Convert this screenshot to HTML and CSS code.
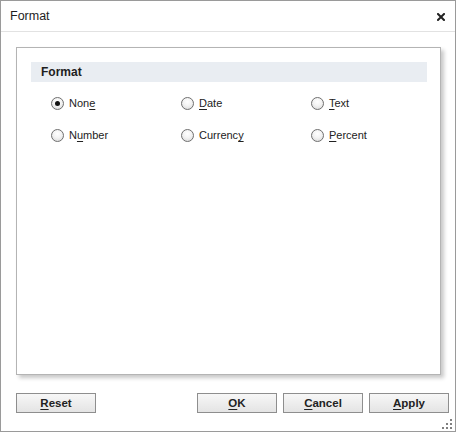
FILE: index.html
```html
<!DOCTYPE html>
<html>
<head>
<meta charset="utf-8">
<link rel="stylesheet" href="styles.css">
</head>
<body>
<div class="dialog">
  <div class="titlebar">
    <span class="title">Format</span>
    <svg class="close" width="8" height="8" viewBox="0 0 8 8"><path d="M1 1 L7 7 M7 1 L1 7" stroke="#222" stroke-width="2" stroke-linecap="square" fill="none"/></svg>
  </div>
  <div class="content">
    <div class="panel">
      <div class="section-head">Format</div>
      <div class="options">
        <label class="opt"><span class="radio checked"></span><span>Non<u>e</u></span></label>
        <label class="opt"><span class="radio"></span><span><u>D</u>ate</span></label>
        <label class="opt"><span class="radio"></span><span><u>T</u>ext</span></label>
        <label class="opt"><span class="radio"></span><span>N<u>u</u>mber</span></label>
        <label class="opt"><span class="radio"></span><span>Currenc<u>y</u></span></label>
        <label class="opt"><span class="radio"></span><span><u>P</u>ercent</span></label>
      </div>
    </div>
  </div>
  <div class="buttons">
    <button class="btn"><u>R</u>eset</button>
    <div class="spacer"></div>
    <button class="btn"><u>O</u>K</button>
    <button class="btn"><u>C</u>ancel</button>
    <button class="btn"><u>A</u>pply</button>
  </div>
  <div class="grip">
    <i class="d1"></i><i class="d2"></i><i class="d3"></i>
    <i class="d4"></i><i class="d5"></i><i class="d6"></i>
  </div>
</div>
</body>
</html>
```
FILE: styles.css
```css
html, body {
  margin: 0;
  padding: 0;
  background: #fff;
}
.dialog {
  position: relative;
  width: 456px;
  height: 432px;
  box-sizing: border-box;
  border: 1px solid #9a9a9a;
  background: #fff;
  display: flex;
  flex-direction: column;
  font-family: "Liberation Sans", Arial, sans-serif;
  color: #222;
}
.titlebar {
  height: 30px;
  border-bottom: 1px solid #e2e2e2;
  display: flex;
  align-items: center;
  justify-content: space-between;
  padding: 0 10px 0 9px;
  flex: none;
}
.title {
  font-size: 12.5px;
  color: #1e1e1e;
  padding-bottom: 1px;
}
.close {
  display: block;
  margin-top: 1px;
}
.content {
  padding: 15px 0 0 15px;
  flex: none;
}
.panel {
  width: 425px;
  height: 328px;
  box-sizing: border-box;
  border: 1px solid #b4b4b4;
  box-shadow: 3px 3px 4px rgba(0, 0, 0, 0.22);
  padding: 14px 13px 0 14px;
  background: #fff;
}
.section-head {
  height: 20px;
  background: #e9edf2;
  font-size: 12px;
  font-weight: bold;
  line-height: 20px;
  padding-left: 10px;
  color: #1e1e1e;
}
.options {
  display: grid;
  grid-template-columns: 130px 130px 130px;
  grid-auto-rows: 32px;
  padding: 5px 0 0 20px;
}
.opt {
  display: flex;
  align-items: center;
  font-size: 11px;
  color: #222;
}
.opt u {
  text-decoration: underline;
  text-underline-offset: 2px;
}
.radio {
  width: 11px;
  height: 11px;
  border: 1px solid #6f6f6f;
  border-radius: 50%;
  background: radial-gradient(circle at 50% 35%, #ffffff 0%, #f3f3f3 45%, #d4d4d4 100%);
  margin-right: 5px;
  position: relative;
  flex: none;
}
.radio.checked::after {
  content: "";
  position: absolute;
  left: 3px;
  top: 3px;
  width: 5px;
  height: 5px;
  border-radius: 50%;
  background: #111;
}
.buttons {
  display: flex;
  gap: 6px;
  padding: 18px 0 0 15px;
  flex: none;
}
.spacer {
  width: 89px;
}
.btn {
  width: 80px;
  height: 20px;
  box-sizing: border-box;
  border: 1px solid #8e8e8e;
  background: linear-gradient(#f7f7f7, #e4e4e4);
  font-family: "Liberation Sans", Arial, sans-serif;
  font-size: 11.5px;
  font-weight: bold;
  color: #222;
  padding: 0;
  margin: 0;
  border-radius: 0;
}
.btn u {
  text-underline-offset: 2px;
}
.grip {
  position: absolute;
  right: 2px;
  bottom: 2px;
  width: 11px;
  height: 11px;
}
.grip i {
  position: absolute;
  width: 2px;
  height: 2px;
  background: #808080;
}
.grip .d1 { right: 1px; top: 1px; }
.grip .d2 { right: 1px; top: 5px; }
.grip .d3 { right: 5px; top: 5px; }
.grip .d4 { right: 1px; top: 9px; }
.grip .d5 { right: 5px; top: 9px; }
.grip .d6 { right: 9px; top: 9px; }
```
